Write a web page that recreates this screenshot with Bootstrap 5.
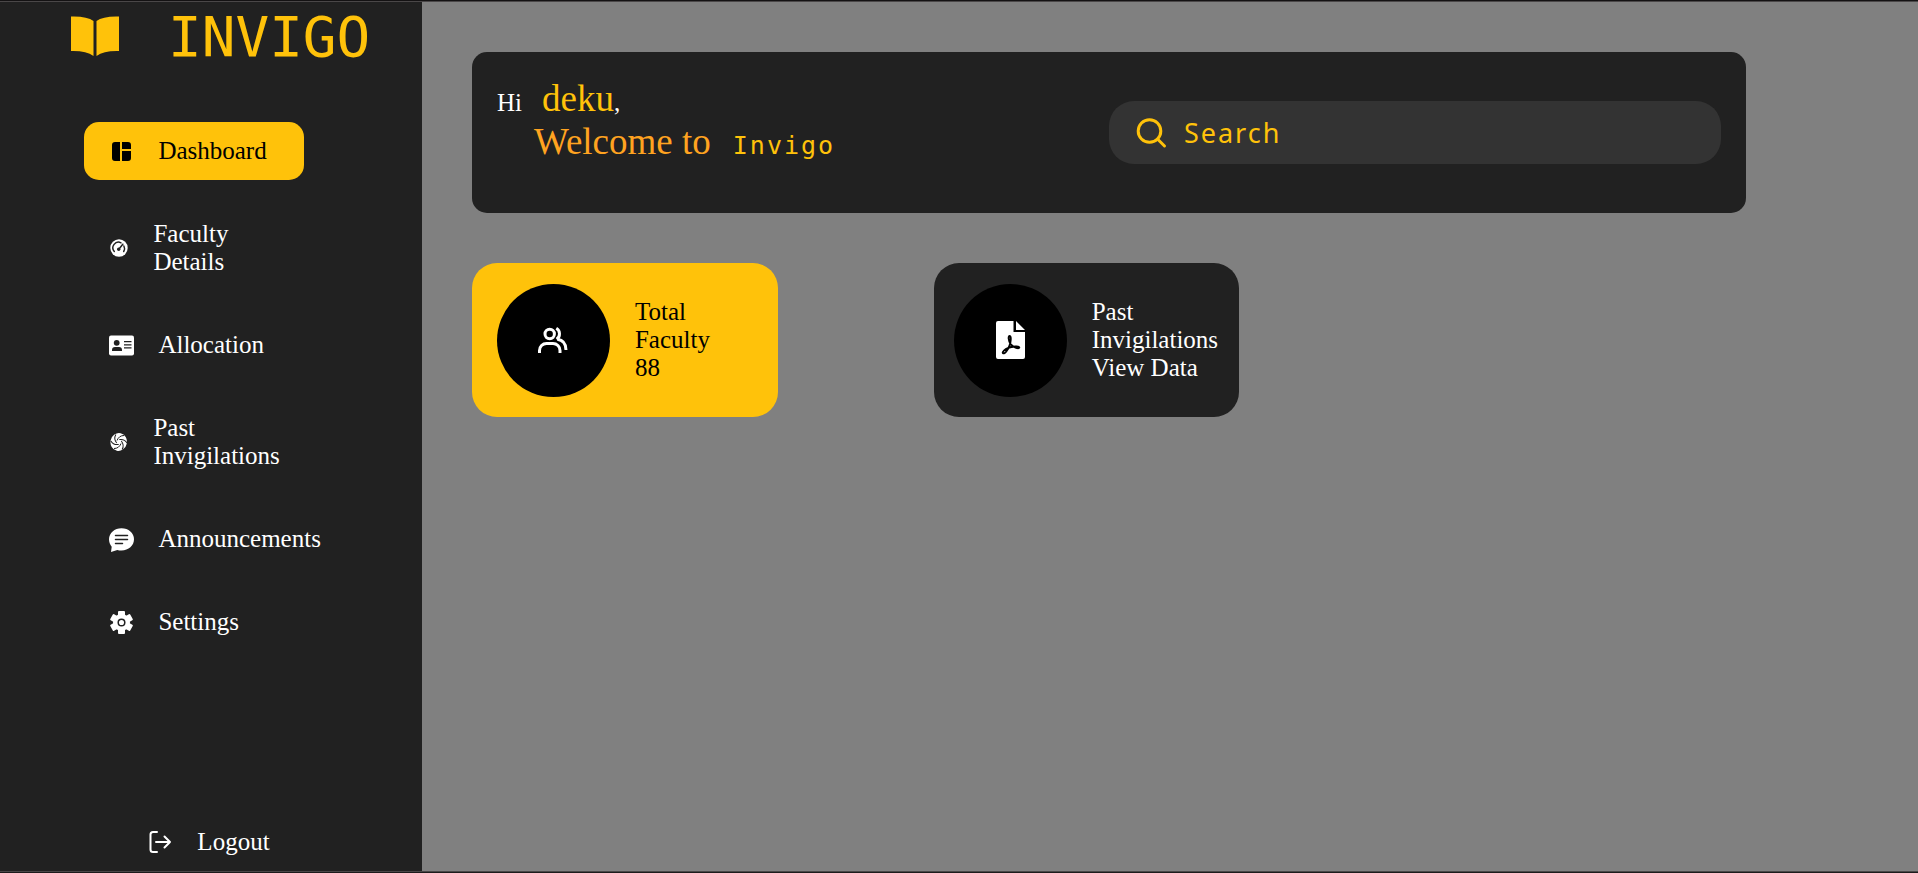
<!DOCTYPE html>
<html lang="en">
<head>
<meta charset="utf-8">
<meta name="viewport" content="width=device-width, initial-scale=1">
<title>Invigo</title>
<link href="https://cdn.jsdelivr.net/npm/bootstrap@5.3.0/dist/css/bootstrap.min.css" rel="stylesheet">
<style>
  :root { --ink: #212121; --gold: #ffc20a; --line: #4a4748; }
  body {
    font-family: "Liberation Serif", "Times New Roman", serif;
    font-size: 25px; line-height: 28px;
    background: #808080; color: #fff;
    border-top: 1px solid #141213; border-bottom: 1px solid #1c1b1c;
  }
  .shell { border-top: 1px solid var(--line); border-bottom: 1px solid var(--line); min-height: calc(100vh - 2px); }
  a { color: inherit; text-decoration: none; }
  svg { display: block; flex-shrink: 0; }
  .gap-item { gap: 24px; }
  .gap-tile { gap: 25px; }

  .sidebar { width: 22%; background: var(--ink); }
  .brand { gap: 48px; height: 70px; padding-left: 70px; color: var(--gold); }
  .brand-name { font: 56px/70px "Comic Sans MS", "DejaVu Sans Mono", monospace; }
  .menu { margin: 50px 0 25px; padding-left: 20%; gap: 25px; }
  .menu-link { width: 65%; padding: 15px 25px; border-radius: 15px; }
  .menu-link.active { background: var(--gold); color: #000; }
  .logout { padding: 15px 25px; margin-left: 29%; }

  .content { padding: 50px; }
  .inner { width: 91.25%; }
  .hero { background: var(--ink); border-radius: 15px; padding: 25px; min-height: 161px; }
  .greeting { padding-bottom: 25px; }
  .greeting .large { font-size: 37px; line-height: 43px; }
  .user-name { color: var(--gold); margin-left: 20px; }
  .welcome { color: #ffa320; margin-left: 37px; }
  .product { font-family: "Comic Sans MS", "DejaVu Sans Mono", monospace; letter-spacing: 2px; color: var(--gold); margin-left: 22px; }
  .search { background: #333; border-radius: 25px; height: 63px; padding: 0 25px; gap: 16px; color: var(--gold); }
  .search input {
    background: none; border: 0; outline: 0; padding: 0; min-width: 0; color: var(--gold);
    font: 27px/35px "Comic Sans MS", "Noto Sans", sans-serif; letter-spacing: 2px;
  }
  .search input::placeholder { color: var(--gold); opacity: 1; }

  .tiles { margin-top: 50px; gap: 156px; }
  .tile { width: 24%; min-height: 154px; border-radius: 25px; padding: 20px 25px; }
  .tile-gold { background: var(--gold); color: #000; }
  .tile-dark { background: var(--ink); padding: 20px; }
  .disc { width: 113px; height: 113px; border-radius: 50%; background: #000; color: #fff; flex-shrink: 0; }
</style>
</head>
<body>
<div class="shell d-flex">
  <aside class="sidebar d-flex flex-column flex-shrink-0">
    <a href="#" class="brand d-flex align-items-start">
      <svg width="50" height="56" viewBox="0 0 50 56" fill="currentColor"><path d="M1 14.500Q17 14 23.500 19V54Q16 48.500 1 49Z"/><path d="M49 14.500Q33 14 26.500 19V54Q34 48.500 49 49Z"/></svg>
      <span class="brand-name">INVIGO</span>
    </a>
    <nav class="menu d-flex flex-column">
      <a href="#" class="menu-link active d-flex align-items-center gap-item" aria-current="page">
        <svg width="25" height="25" viewBox="0 0 25 25" fill="currentColor"><path d="M6 3h5v19H6a3 3 0 0 1-3-3V6a3 3 0 0 1 3-3zM13 3h6a3 3 0 0 1 3 3v4h-9zM13 12h9v7a3 3 0 0 1-3 3h-6z"/></svg>
        <span>Dashboard</span>
      </a>
      <a href="#" class="menu-link d-flex align-items-center gap-item">
        <svg width="20" height="20" viewBox="0 0 20 20"><circle cx="10" cy="10" r="8.700" fill="#fff"/><g fill="none" stroke="#212121" stroke-width="1.500" stroke-linecap="round"><path d="M5.300 13.500A5.600 5.600 0 0 1 12 4.800M14.900 8a5.600 5.600 0 0 1-.2 5.500M9.800 11.200l4-5"/></g><circle cx="9.700" cy="11.300" r="1.700" fill="#212121"/></svg>
        <span>Faculty Details</span>
      </a>
      <a href="#" class="menu-link d-flex align-items-center gap-item">
        <svg width="25" height="25" viewBox="0 0 25 25"><rect y="2.500" width="25" height="20" rx="2" fill="#fff"/><g fill="#212121"><circle cx="7.700" cy="9.800" r="2.900"/><path d="M3 18v-1a3 3 0 0 1 3-3h4a3 3 0 0 1 3 3v1zM15 8h7.500v1.300H15zM15 11.200h7.500v1.300H15zM15 14.300h7.500v1.300H15z"/></g></svg>
        <span>Allocation</span>
      </a>
      <a href="#" class="menu-link d-flex align-items-center gap-item">
        <svg width="20" height="20" viewBox="0 0 20 20"><ellipse cx="9.700" cy="10" rx="8.200" ry="9" fill="#fff" transform="rotate(12 10 10)"/><g fill="none" stroke="#212121" stroke-width="1"><path id="blade" d="M8 8.500Q10 3.500 15 3.500"/><use href="#blade" transform="rotate(60 10 10)"/><use href="#blade" transform="rotate(120 10 10)"/><use href="#blade" transform="rotate(180 10 10)"/><use href="#blade" transform="rotate(240 10 10)"/><use href="#blade" transform="rotate(300 10 10)"/></g></svg>
        <span>Past Invigilations</span>
      </a>
      <a href="#" class="menu-link d-flex align-items-center gap-item">
        <svg width="25" height="25" viewBox="0 0 25 25"><path fill="#fff" d="M12.500 1.200C19.500 1.200 25 6 25 12.300s-5.500 11.200-12.500 11.200c-1.500 0-3-.1-4.200-.5L2 25l.7-5.200C1 17.700 0 15.200 0 12.300 0 6 5.500 1.200 12.500 1.200z"/><path stroke="#212121" stroke-width="1.500" stroke-linecap="round" d="M6.500 8.500h12M6.500 12.500h12M6.500 16.500h7"/></svg>
        <span>Announcements</span>
      </a>
      <a href="#" class="menu-link d-flex align-items-center gap-item">
        <svg width="25" height="25" viewBox="0 0 25 25"><g fill="#fff"><circle cx="12.500" cy="12.500" r="8.500"/><rect id="tooth" x="9" y="1" width="7" height="23" rx="1"/><use href="#tooth" transform="rotate(60 12.500 12.500)"/><use href="#tooth" transform="rotate(120 12.500 12.500)"/></g><circle cx="12.500" cy="12.500" r="3.300" fill="none" stroke="#212121" stroke-width="1.500"/></svg>
        <span>Settings</span>
      </a>
    </nav>
    <a href="#" class="logout d-flex align-items-center gap-tile mt-auto">
      <svg width="25" height="24" viewBox="0 0 25 24" fill="none" stroke="#fff" stroke-width="2" stroke-linecap="round" stroke-linejoin="round"><path d="M10 22H6a2.500 2.500 0 0 1-2.500-2.500v-15A2.500 2.500 0 0 1 6 2h4M9 12h14M17.500 6.500L23 12l-5.500 5.500"/></svg>
      <span>Logout</span>
    </a>
  </aside>

  <main class="content flex-grow-1">
    <div class="inner">
      <header class="hero d-flex align-items-center">
        <div class="greeting w-50">
          <div>Hi<span class="user-name large">deku</span>,</div>
          <div><span class="welcome large">Welcome to</span><span class="product">Invigo</span></div>
        </div>
        <label class="search w-50 d-flex align-items-center">
          <svg width="34" height="34" viewBox="0 0 34 34" fill="none" stroke="currentColor" stroke-width="3" stroke-linecap="round"><circle cx="15.500" cy="15" r="11.300"/><path d="M23.500 23l7 7"/></svg>
          <input type="text" class="flex-grow-1" placeholder="Search" aria-label="Search">
        </label>
      </header>
      <section class="tiles d-flex">
        <div class="tile tile-gold d-flex align-items-center gap-tile">
          <div class="disc d-flex align-items-center justify-content-center">
            <svg width="30" height="28" viewBox="0 0 30 28" fill="none" stroke="currentColor" stroke-width="3"><circle cx="11.700" cy="8" r="4.700"/><path d="M1.500 27v-2.500a7 7 0 0 1 7-7h6.500a7 7 0 0 1 7 7V27M18.300 2.300a6.500 6.500 0 0 1 .3 11M19.300 13.300q8.700 1.200 8.700 10.700"/></svg>
          </div>
          <div>Total<br>Faculty<br>88</div>
        </div>
        <a href="#" class="tile tile-dark d-flex align-items-center gap-tile">
          <div class="disc d-flex align-items-center justify-content-center">
            <svg width="29" height="38" viewBox="0 0 29 38"><path fill="#fff" d="M2 0h15.500v11H29v25a2 2 0 0 1-2 2H2a2 2 0 0 1-2-2V2a2 2 0 0 1 2-2zM20 0l9 9h-9z"/><path fill="none" stroke="#000" stroke-width="1.900" stroke-linejoin="round" d="M13.700 15c-1.700 0-1.300 4.500.9 8 2 3 8.200 5.600 8.700 3.600.4-2-7.500-1.200-11 .3-3.500 1.500-6.300 4-5.400 5.200 1.700 1.600 5.200-3.500 6.500-7.200 1.500-4 2-9.900.3-9.900z"/></svg>
          </div>
          <div>Past Invigilations<br><span class="text-nowrap">View Data</span></div>
        </a>
      </section>
    </div>
  </main>
</div>
<script src="https://cdn.jsdelivr.net/npm/bootstrap@5.3.0/dist/js/bootstrap.bundle.min.js"></script>
</body>
</html>
